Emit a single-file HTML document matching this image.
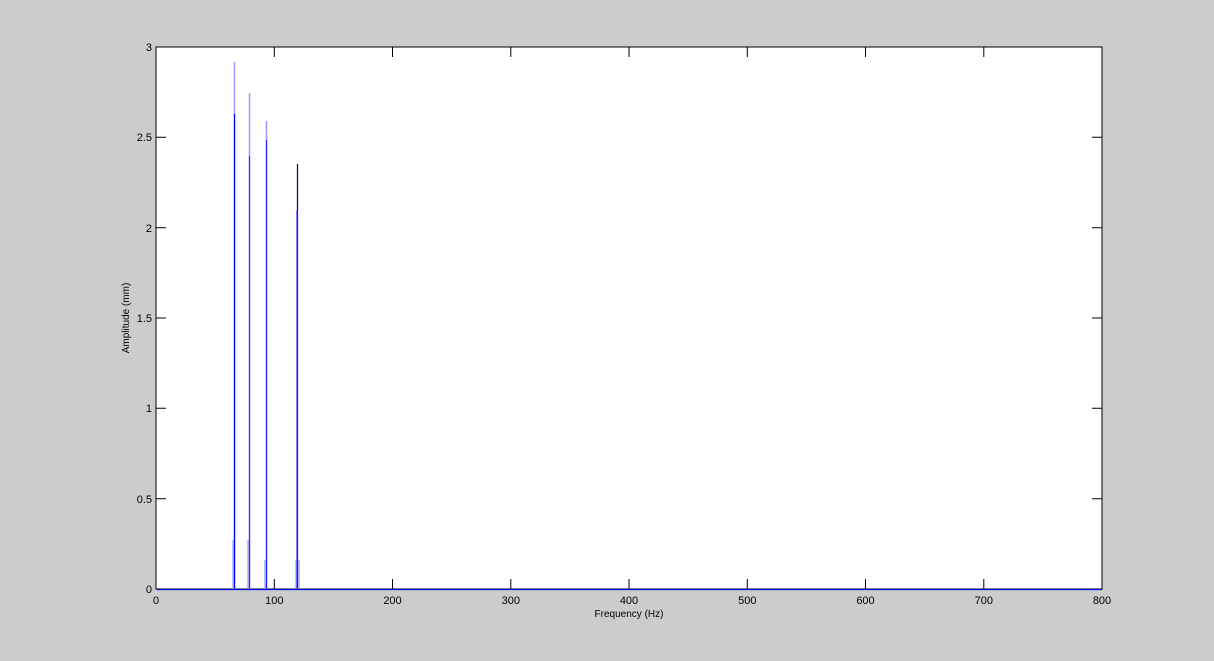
<!DOCTYPE html><html><head><style>body{margin:0;background:#cccccc}svg{display:block}text{font-family:"Liberation Sans",sans-serif;font-size:11px;fill:#000}</style></head><body>
<svg width="1214" height="661" xmlns="http://www.w3.org/2000/svg">
<rect width="1214" height="661" fill="#cccccc"/>
<rect x="156" y="47" width="946" height="542" fill="#fff" stroke="#000" stroke-width="1"/>
<g stroke="#000" stroke-width="1">
<path d="M274.3 589v-10M392.5 589v-10M510.8 589v-10M629 589v-10M747.3 589v-10M865.5 589v-10M983.8 589v-10
M274.3 47v10M392.5 47v10M510.8 47v10M629 47v10M747.3 47v10M865.5 47v10M983.8 47v10
M156 498.7h10M156 408.3h10M156 318h10M156 227.7h10M156 137.3h10
M1102 498.7h-10M1102 408.3h-10M1102 318h-10M1102 227.7h-10M1102 137.3h-10"/>
</g>
<g stroke-width="1.2">
<path d="M157 589.5H1102" stroke="#0000ee"/>
<path d="M234.5 589V62" stroke="#9999ff" stroke-width="1.5"/>
<path d="M234.5 589V114" stroke="#0000ff"/>
<path d="M249.5 589V93" stroke="#9999ff" stroke-width="1.5"/>
<path d="M249.5 589V156" stroke="#3333ff"/>
<path d="M266.5 589V121" stroke="#9999ff" stroke-width="1.5"/>
<path d="M266.5 589V140" stroke="#2222ff"/>
<path d="M297.5 589V164" stroke="#000066"/>
<path d="M297 589V210" stroke="#3333ff"/>
<path d="M233 589V540M248 589V540M265 589V560M296 589V560M299 589V560" stroke="#9999ff"/>
</g>
<g text-anchor="end">
<text x="152" y="593">0</text><text x="152" y="503">0.5</text><text x="152" y="412">1</text><text x="152" y="322">1.5</text><text x="152" y="232">2</text><text x="152" y="141">2.5</text><text x="152" y="51">3</text>
</g>
<g text-anchor="middle">
<text x="156" y="604">0</text><text x="274.3" y="604">100</text><text x="392.5" y="604">200</text><text x="510.8" y="604">300</text><text x="629" y="604">400</text><text x="747.3" y="604">500</text><text x="865.5" y="604">600</text><text x="983.8" y="604">700</text><text x="1102" y="604">800</text>
<text x="629" y="617" style="font-size:10px">Frequency (Hz)</text>
<text transform="translate(129 318) rotate(-90)" style="font-size:10px">Amplitude (mm)</text>
</g>
</svg></body></html>
